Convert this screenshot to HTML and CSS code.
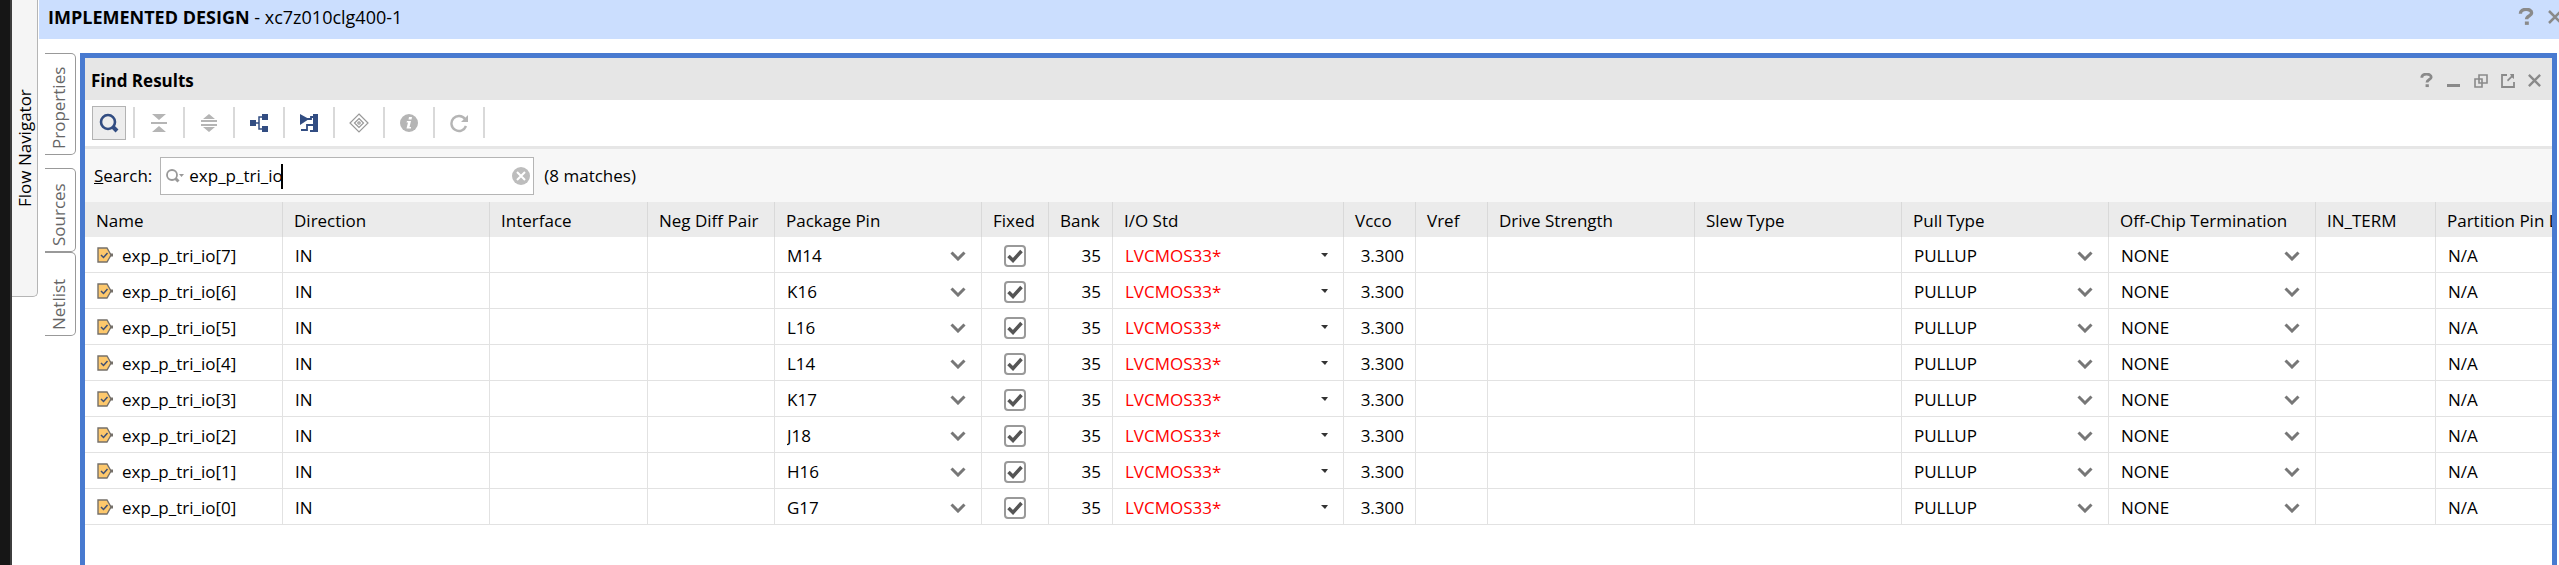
FILE: index.html
```
<!DOCTYPE html>
<html lang="en">
<head>
<meta charset="utf-8">
<title>Implemented Design</title>
<link rel="stylesheet" href="styles.css">
</head>
<body>
<svg class="defs" aria-hidden="true">
  <symbol id="port" viewBox="0 0 17 17"><path d="M1 1h9l4 7-4 7H1z" fill="#fdc86c" stroke="#75706a" stroke-width="1.4"/><path d="M13 6.500v3h3v-3z" fill="#75706a"/><path d="M4 8l2.500 2.500L10.500 6" fill="none" stroke="#3f4f74" stroke-width="1.500"/></symbol>
  <symbol id="help" viewBox="0 0 16 16"><path d="M3 5c0-5 10-5 10-.5C13 7 8.500 7 8.500 10" fill="none" stroke="#8a8a8a" stroke-width="3"/><path d="M7 12h3.500v3H7z" fill="#8a8a8a"/></symbol>
  <symbol id="close" viewBox="0 0 16 16"><path d="M2 2l12 12M14 2L2 14" fill="none" stroke="#8a8a8a" stroke-width="2.500"/></symbol>
</svg>
<div class="app">
  <div class="desktop-edge"></div>
  <aside class="navigator"><button class="nav-tab">Flow Navigator</button></aside>
  <main class="main">
    <header class="design-bar">
      <h1><b>IMPLEMENTED DESIGN</b> - xc7z010clg400-1</h1>
      <button class="icon-button" aria-label="Help"><svg class="i18"><use href="#help"/></svg></button>
      <button class="icon-button" aria-label="Close"><svg class="i16"><use href="#close"/></svg></button>
    </header>
    <div class="workspace">
      <nav class="side-tabs">
        <button class="tab tab-properties">Properties</button>
        <button class="tab">Sources</button>
        <button class="tab">Netlist</button>
      </nav>
      <section class="panel">
        <div class="panel-title">
          <h2>Find Results</h2>
          <button class="icon-button" aria-label="Help"><svg class="i15"><use href="#help"/></svg></button>
          <button class="icon-button" aria-label="Minimize"><svg class="i15" viewBox="0 0 15 15"><path d="M1 11h13v3H1z" fill="#8a8a8a"/></svg></button>
          <button class="icon-button" aria-label="Restore"><svg class="i15" viewBox="0 0 15 15" fill="none" stroke="#8a8a8a" stroke-width="1.600"><path d="M2 6h7v8H2z"/><path d="M6 9V2h8v8H6z"/></svg></button>
          <button class="icon-button" aria-label="Float"><svg class="i15" viewBox="0 0 15 15"><path d="M7 2H2v12h12V9" fill="none" stroke="#8a8a8a" stroke-width="1.800"/><path d="M14 1v5l-2-1.500-4 4L7 7l4-4-1-2z" fill="#8a8a8a"/></svg></button>
          <button class="icon-button" aria-label="Close"><svg class="i15"><use href="#close"/></svg></button>
        </div>
        <div class="toolbar">
          <button class="tool active" aria-label="Search"><svg viewBox="0 0 20 20"><circle cx="9" cy="9" r="7" fill="none" stroke="#324d82" stroke-width="2.600"/><path d="M14 14l4 4" stroke="#324d82" stroke-width="4"/></svg></button>
          <button class="tool" aria-label="Collapse all"><svg viewBox="0 0 20 20" fill="#b5b5b5"><path d="M3 1h14l-7 6zM2 9h16v2H2zM3 19h14l-7-6z"/></svg></button>
          <button class="tool" aria-label="Expand all"><svg viewBox="0 0 20 20" fill="#b5b5b5"><path d="M4 6h12l-6-5zM2 7h16v2H2zM2 11h16v2H2zM4 14h12l-6 5z"/></svg></button>
          <button class="tool" aria-label="Hierarchy"><svg viewBox="0 0 20 20"><path d="M1 7h6v6H1zM13 1h6v6h-6zM13 13h6v6h-6z" fill="#324d82"/><path d="M7 10h3M13 4h-3v12h3" fill="none" stroke="#324d82" stroke-width="1.500"/></svg></button>
          <button class="tool" aria-label="Schematic"><svg viewBox="0 0 20 20"><path d="M1 1l9 5-9 6zM14 1h5v18h-5z" fill="#324d82"/><path d="M8 6h4V4h3M2 17h6v-5h7M11 18h5" fill="none" stroke="#324d82" stroke-width="1.800"/></svg></button>
          <button class="tool" aria-label="Select"><svg viewBox="0 0 20 20" fill="none" stroke="#999" stroke-width="1.200"><path d="M10 1l9 9-9 9-9-9z"/><path d="M10 5.500l4.500 4.500-4.500 4.500L5.500 10z"/><circle cx="10" cy="10" r="1.200"/></svg></button>
          <button class="tool" aria-label="Information"><svg viewBox="0 0 20 20"><circle cx="10" cy="10" r="9" fill="#b5b5b5"/><path d="M10 4h3l-.5 2.500h-3zM8 8h4l-1.500 6H12v1.500H7.500L9 9.500H7.500z" fill="#fff"/></svg></button>
          <button class="tool" aria-label="Refresh"><svg viewBox="0 0 20 20"><path d="M16 6a7.500 7.500 0 1 0 1 7" fill="none" stroke="#b5b5b5" stroke-width="2.400"/><path d="M19 2v7h-7z" fill="#b5b5b5"/></svg></button>
        </div>
        <div class="search-row">
          <label for="search"><u>S</u>earch:</label>
          <div class="search-box">
            <svg class="search-icon" viewBox="0 0 18 14"><circle cx="6" cy="6" r="5" fill="none" stroke="#999" stroke-width="1.800"/><path d="M9.500 9.500l3 3" stroke="#999" stroke-width="3"/><path d="M13 5h5l-2.500 3z" fill="#999"/></svg>
            <input id="search" type="text" value="exp_p_tri_io">
            <span class="caret"></span>
            <button class="icon-button" aria-label="Clear"><svg class="i18" viewBox="0 0 18 18"><circle cx="9" cy="9" r="9" fill="#bdbdbd"/><path d="M5 5l8 8M13 5l-8 8" stroke="#fff" stroke-width="2"/></svg></button>
          </div>
          <span>(8 matches)</span>
        </div>
        <div class="table-wrap">
          <table class="results">
            <colgroup><col class="w198"><col class="w207"><col class="w158"><col class="w127"><col class="w207"><col class="w67"><col class="w64"><col class="w231"><col class="w72"><col class="w72"><col class="w207"><col class="w207"><col class="w207"><col class="w207"><col class="w120"><col class="w207"></colgroup>
            <thead><tr><th>Name</th><th>Direction</th><th>Interface</th><th>Neg Diff Pair</th><th>Package Pin</th><th>Fixed</th><th>Bank</th><th>I/O Std</th><th>Vcco</th><th>Vref</th><th>Drive Strength</th><th>Slew Type</th><th>Pull Type</th><th>Off-Chip Termination</th><th>IN_TERM</th><th>Partition Pin Locs</th></tr></thead>
            <tbody id="rows"></tbody>
          </table>
        </div>
      </section>
    </div>
  </main>
</div>
<script src="rows.js"></script>
</body>
</html>
```
FILE: styles.css
```
* { box-sizing: border-box; }
body { margin: 0; background: #fff; color: #000; font: 17px/24px "Open Sans", "Noto Sans", sans-serif; }
button, input, select { font: inherit; color: inherit; background: none; border: 0; padding: 0; margin: 0; border-radius: 0; }
h1, h2 { margin: 0; font-size: 18px; font-weight: 400; flex: 1; }
h2 { font-size: 17px; font-weight: 700; padding-top: 2px; }
svg { display: block; }
.defs { position: absolute; width: 0; height: 0; }
.i15 { width: 15px; height: 15px; }
.i16 { width: 16px; height: 16px; }
.i18 { width: 18px; height: 18px; }
.app { display: flex; min-height: 100vh; overflow: hidden; }
.desktop-edge { flex: none; width: 12px; background: #161616; border-right: 2px solid #3d3d3d; }
.navigator { flex: none; width: 27px; }
.nav-tab { display: flex; align-items: center; writing-mode: vertical-rl; transform: rotate(180deg); width: 26px; height: 297px; padding: 89px 4px 0 0; font-weight: 500; line-height: 20px; background: #f5f5f5; border: solid #b5b5b5; border-width: 1px 0 0 1px; border-radius: 5px 0 0 0; }
.nav-tab { padding-right: 0; }
.main { flex: 1; min-width: 0; display: flex; flex-direction: column; }
.design-bar { display: flex; align-items: center; height: 39px; padding: 0 0 5px 9px; gap: 12px; background: #cbdefe; }
.design-bar .icon-button:last-child { margin-right: -4px; }
.workspace { flex: 1; display: flex; gap: 4px; padding: 14px 2px 0 6px; }
.side-tabs { flex: none; width: 31px; display: flex; flex-direction: column; }
.tab { display: flex; align-items: center; justify-content: flex-start; writing-mode: vertical-rl; transform: rotate(180deg); height: 84px; padding: 5px 0 0 2px; line-height: 26px; color: #666; border: 1px solid #999; border-right: 0; border-radius: 5px 0 0 5px; }
.tab-properties { height: 102px; margin-bottom: 13px; }
.panel { flex: 1; min-width: 0; border: 5px solid #487ad0; border-bottom: 0; }
.panel-title { display: flex; align-items: center; gap: 12px; height: 42px; padding: 2px 10px 0 6px; background: #e6e6e6; }
.toolbar { display: flex; align-items: center; height: 49px; padding: 0 7px; border-bottom: 3px solid #e6e6e6; }
.tool { position: relative; width: 34px; height: 34px; margin-right: 16px; padding: 6px; border: 1px solid transparent; }
.tool.active { background: #ededed; border-color: #b3b3b3; }
.tool::after { content: ""; position: absolute; left: 40px; top: 0; width: 2px; height: 31px; background: #d9d9d9; }
.tool svg { width: 20px; height: 20px; }
.search-row { display: flex; align-items: center; height: 53px; padding: 1px 10px 0 9px; gap: 8px; background: #f7f7f7; }
.search-row > span { padding-left: 2px; }
.search-box { position: relative; display: flex; align-items: center; width: 374px; height: 38px; padding: 0 3px 0 5px; gap: 5px; background: #fff; border: 1px solid #b5b5b5; }
.search-box input { flex: 1; min-width: 0; outline: 0; caret-color: transparent; }
.caret { position: absolute; left: 120px; top: 6px; width: 2px; height: 25px; background: #000; }
.search-icon { width: 18px; height: 14px; }
.table-wrap { overflow: hidden; }
.results { width: 2558px; table-layout: fixed; border-collapse: separate; border-spacing: 0; }
.results th, .results td { height: 36px; padding: 2px 12px 0; border: solid #e2e2e2; border-width: 0 1px 1px 0; text-align: left; font-weight: 400; white-space: nowrap; }
.results th { height: 35px; padding: 2px 0 0 11px; background: #ebebeb; border-color: #d9d9d9; border-bottom: 0; }
.results .num { text-align: right; padding-right: 11px; }
.results .red { color: #f00; }
.name { display: flex; align-items: center; gap: 8px; }
.name svg { width: 17px; height: 17px; }
.pick { display: flex; align-items: center; }
.pick select { flex: 1; appearance: none; }
.pick svg { width: 16px; height: 10px; margin-right: 3px; }
.pick .small { width: 8px; height: 5px; margin-right: 2px; }
.check { display: block; appearance: none; width: 22px; height: 22px; margin: 0 auto; border: 2px solid #999; border-radius: 4px; background: #fff; }
.check-wrap { display: grid; place-items: center; }
.check-wrap > * { grid-area: 1 / 1; }
.check-wrap svg { width: 16px; height: 14px; z-index: 1; pointer-events: none; }
.w198 { width: 198px; } .w207 { width: 207px; } .w158 { width: 158px; } .w127 { width: 127px; }
.w67 { width: 67px; } .w64 { width: 64px; } .w231 { width: 231px; } .w72 { width: 72px; } .w120 { width: 120px; }
```
FILE: rows.js
```
const pins = ["M14", "K16", "L16", "L14", "K17", "J18", "H16", "G17"];
const chevron = '<svg viewBox="0 0 16 10"><path d="M1.500 1.500L8 8l6.500-6.500" fill="none" stroke="#777" stroke-width="3"/></svg>';
const arrow = '<svg class="small" viewBox="0 0 8 5"><path d="M0 0h7L4 4z" fill="#333"/></svg>';
const pick = (label, value, mark) => `<div class="pick"><select aria-label="${label}"><option>${value}</option></select>${mark}</div>`;
document.getElementById("rows").innerHTML = pins.map((pin, i) => {
  const n = 7 - i;
  return `<tr><td><div class="name"><svg><use href="#port"/></svg>exp_p_tri_io[${n}]</div></td><td>IN</td><td></td><td></td>
  <td>${pick("Package pin " + n, pin, chevron)}</td>
  <td><div class="check-wrap"><input class="check" type="checkbox" checked aria-label="Fixed ${n}"><svg viewBox="0 0 16 14"><path d="M1.500 7L6 11.500 14.500 2" fill="none" stroke="#555" stroke-width="3.500"/></svg></div></td>
  <td class="num">35</td><td class="red">${pick("I/O standard " + n, "LVCMOS33*", arrow)}</td><td class="num">3.300</td><td></td><td></td><td></td>
  <td>${pick("Pull type " + n, "PULLUP", chevron)}</td><td>${pick("Termination " + n, "NONE", chevron)}</td><td></td><td>N/A</td></tr>`;
}).join("");
```
